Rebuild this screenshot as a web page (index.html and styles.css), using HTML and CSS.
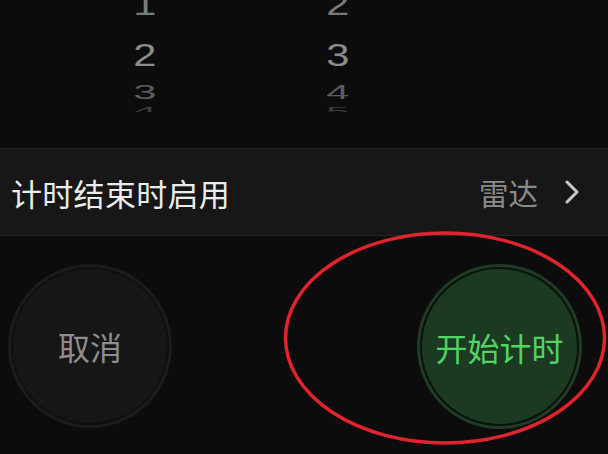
FILE: index.html
```html
<!DOCTYPE html>
<html lang="zh-CN">
<head>
<meta charset="utf-8">
<title>计时器</title>
<link rel="stylesheet" href="styles.css">
</head>
<body>
<div class="screen">
  <div class="picker">
    <div class="wheel">
      <div class="col">
        <span class="item i1">1</span>
        <span class="item i2">2</span>
        <span class="item i3">3</span>
        <span class="item i4">4</span>
      </div>
      <div class="col">
        <span class="item i1">2</span>
        <span class="item i2">3</span>
        <span class="item i3">4</span>
        <span class="item i4">5</span>
      </div>
    </div>
  </div>
  <div class="row">
    <span class="row-label">计时结束时启用</span>
    <span class="row-value">雷达</span>
    <svg class="chev" width="14" height="24" viewBox="0 0 14 24"><polyline points="2,2 12,12 2,22" fill="none" stroke="#c8c8c8" stroke-width="3" stroke-linecap="round" stroke-linejoin="round"/></svg>
  </div>
  <div class="actions">
    <div class="btn btn-cancel"><span>取消</span></div>
    <div class="btn btn-start"><span>开始计时</span></div>
  </div>
  <svg class="annot" width="324" height="216" viewBox="0 0 324 216"><ellipse cx="162" cy="107" rx="159.5" ry="105" fill="none" stroke="#e0232d" stroke-width="3.5"/></svg>
</div>
</body>
</html>
```
FILE: styles.css
```css
html, body {
  margin: 0;
  padding: 0;
  background: #0c0c0c;
}
.screen {
  position: relative;
  width: 608px;
  height: 454px;
  overflow: hidden;
  background: #0c0c0c;
  font-family: "Noto Sans CJK SC", "Noto Sans", sans-serif;
}
.picker {
  height: 148px;
}
.wheel {
  height: 112px;
  overflow: hidden;
  display: grid;
  grid-template-columns: 100px 100px;
  column-gap: 93px;
  padding-left: 95px;
}
.col {
  display: flex;
  flex-direction: column;
  align-items: center;
  font-family: "Liberation Sans", Arial, sans-serif;
  font-size: 32px;
}
.item {
  display: block;
  height: 24px;
  line-height: 24px;
  flex: none;
}
.i1 {
  margin-top: -8px;
  color: #7a7a7a;
  transform: scale(1.3, 1);
}
.i2 {
  margin-top: 26.5px;
  color: #8c8c8c;
  transform: scale(1.3, 1);
}
.i3 {
  margin-top: 13px;
  color: #5c5c5c;
  transform: scale(1.3, 0.62);
}
.i4 {
  margin-top: -5px;
  color: #3e3e3e;
  transform: scale(1.3, 0.32);
}
.row {
  height: 86px;
  box-sizing: content-box;
  border-top: 1px solid #262626;
  border-bottom: 1px solid #262626;
  background: #171717;
  display: flex;
  align-items: center;
  padding: 0 29px 0 11px;
}
.row-label {
  flex: 1;
  font-size: 31px;
  color: #ececec;
  letter-spacing: 0.3px;
}
.row-value {
  font-size: 29.5px;
  color: #8a8a8a;
  margin-right: 27px;
}
.chev {
  display: block;
}
.actions {
  display: flex;
  justify-content: space-between;
  padding: 28px 26px 0 8px;
}
.btn {
  border-radius: 50%;
  box-sizing: border-box;
  display: flex;
  align-items: center;
  justify-content: center;
}
.btn-cancel {
  width: 158px;
  height: 158px;
  margin: 3px;
  background: #161616;
  border: 2px solid #101010;
  box-shadow: 0 0 0 3px #1b1b1b;
  font-size: 32px;
  color: #8d8d8d;
}
.btn-start {
  width: 159px;
  height: 159px;
  margin: 3px;
  background: #1c3a22;
  border: 2px solid #0b120c;
  box-shadow: 0 0 0 3px #1f3b25;
  font-size: 32px;
  color: #52d463;
}
.annot {
  position: absolute;
  left: 283px;
  top: 231px;
}
```
